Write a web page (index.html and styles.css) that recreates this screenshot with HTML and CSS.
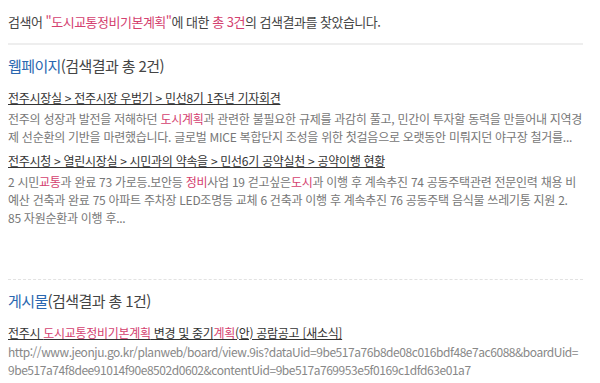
FILE: index.html
```html
<!DOCTYPE html>
<html lang="ko">
<head>
    <meta charset="UTF-8">
    <meta name="viewport" content="width=device-width, initial-scale=1.0">
    <title>통합검색</title>
    <link rel="stylesheet" href="styles.css">
</head>
<body>
    <div class="search-result">
        <p class="summary">검색어 <strong class="hl">"도시교통정비기본계획"</strong>에 대한 <strong class="hl">총 3건</strong>의 검색결과를 찾았습니다.</p>

        <!-- 웹페이지 -->
        <section class="group">
            <h2><span class="cat">웹페이지</span>(검색결과 총 2건)</h2>
            <div class="item">
                <a href="#" class="item-title">전주시장실 &gt; 전주시장 우범기 &gt; 민선8기 1주년 기자회견</a>
                <p class="item-desc">전주의 성장과 발전을 저해하던 <em class="hl">도시계획</em>과 관련한 불필요한 규제를 과감히 풀고, 민간이 투자할 동력을 만들어내 지역경제 선순환의 기반을 마련했습니다. 글로벌 MICE 복합단지 조성을 위한 첫걸음으로 오랫동안 미뤄지던 야구장 철거를...</p>
            </div>
            <div class="item">
                <a href="#" class="item-title">전주시청 &gt; 열린시장실 &gt; 시민과의 약속을 &gt; 민선6기 공약실천 &gt; 공약이행 현황</a>
                <p class="item-desc">2 시민<em class="hl">교통</em>과 완료 73 가로등.보안등 <em class="hl">정비</em>사업 19 걷고싶은<em class="hl">도시</em>과 이행 후 계속추진 74 공동주택관련 전문인력 채용 비예산 건축과 완료 75 아파트 주차장 LED조명등 교체 6 건축과 이행 후 계속추진 76 공동주택 음식물 쓰레기통 지원 2. 85 자원순환과 이행 후...</p>
            </div>
        </section>

        <!-- 게시물 -->
        <section class="group board">
            <h2><span class="cat">게시물</span>(검색결과 총 1건)</h2>
            <div class="item">
                <a href="#" class="item-title">전주시 <span class="hl">도시교통정비기본계획</span> 변경 및 중기<span class="hl">계획</span>(안) 공람공고 [새소식]</a>
                <p class="item-url">http://www.jeonju.go.kr/planweb/board/view.9is?dataUid=9be517a76b8de08c016bdf48e7ac6088&amp;boardUid=9be517a74f8dee91014f90e8502d0602&amp;contentUid=9be517a769953e5f0169c1dfd63e01a7</p>
                <p class="item-date">2019.07.11</p>
            </div>
        </section>
    </div>
</body>
</html>
```

FILE: styles.css
```css
body {
    margin: 0;
    padding: 0;
    background-color: #fff;
    font-family: "Noto Sans CJK KR", "Noto Sans", sans-serif;
    color: #555;
}

.search-result {
    width: 575px;
    padding: 0 8px;
}

.hl {
    color: #d4416f;
    font-style: normal;
}

.summary {
    margin: 0;
    padding: 12px 0 12px;
    font-size: 13px;
    letter-spacing: -0.5px;
    color: #444;
    border-bottom: 2px solid #eee;
}

.summary strong {
    font-weight: normal;
}

.group {
    padding-top: 10px;
}

.group h2 {
    margin: 0 0 13px;
    font-size: 15px;
    font-weight: normal;
    letter-spacing: -0.6px;
    color: #444;
}

.group h2 .cat {
    color: #2a67b0;
}

.item {
    margin-bottom: 6px;
}

.item-title {
    display: block;
    color: #333;
    font-size: 12px;
    letter-spacing: -0.3px;
    text-decoration: underline;
    line-height: 18px;
}

.item-desc {
    margin: 3px 0 0;
    font-size: 12px;
    letter-spacing: -0.27px;
    line-height: 18px;
    color: #777;
}

.board {
    margin-top: 52px;
    border-top: 1px dashed #e2e2e2;
}

.item-url {
    margin: 1px 0 0;
    font-size: 12px;
    letter-spacing: -0.45px;
    line-height: 18px;
    color: #888;
    word-break: break-all;
}

.item-date {
    margin: 0;
    font-size: 12px;
    line-height: 18px;
    color: #888;
}
```
